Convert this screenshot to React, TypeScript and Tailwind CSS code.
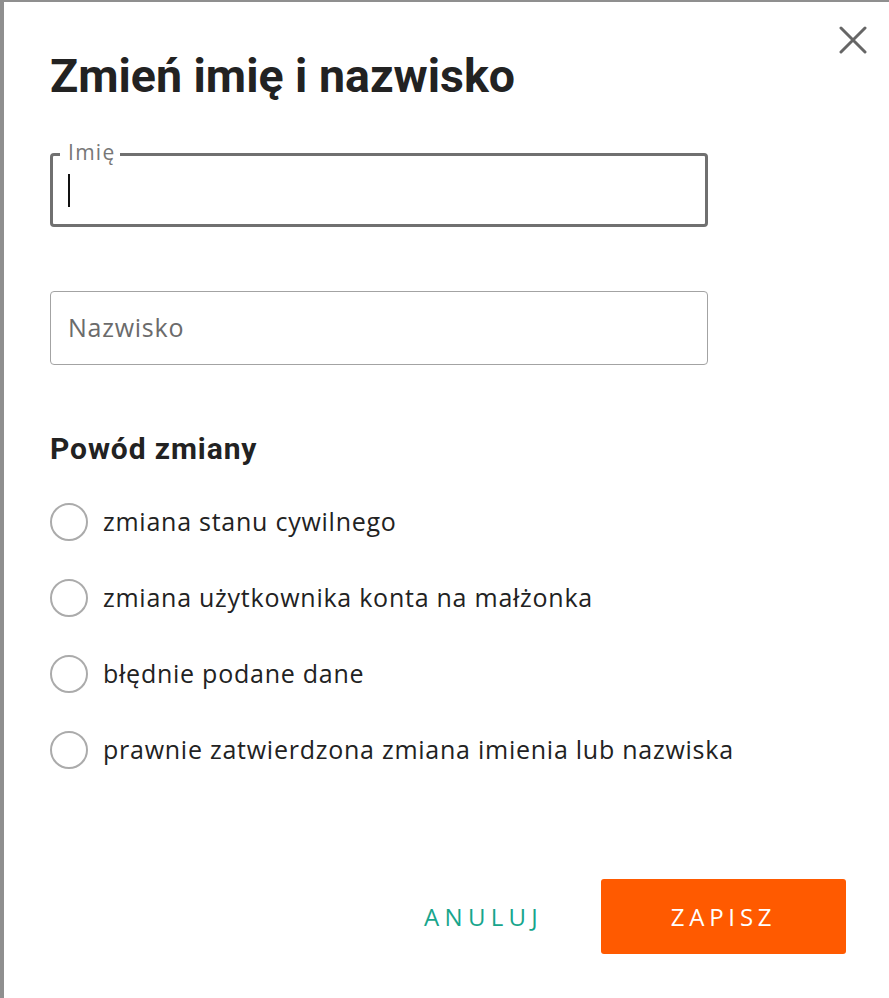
import { useState } from 'react';

const reasons = [
  'zmiana stanu cywilnego',
  'zmiana użytkownika konta na małżonka',
  'błędnie podane dane',
  'prawnie zatwierdzona zmiana imienia lub nazwiska',
];

export default function App() {
  const [reason, setReason] = useState<number | null>(null);

  return (
    <div className="min-h-screen bg-[#8f8f8f] pl-[4px] pt-[2px] font-['Open_Sans',sans-serif]">
      <div className="relative min-h-[996px] bg-white pl-[46px] pr-[43px] pt-[48px]">
        {/* Close */}
        <button className="absolute right-[20px] top-[22px] p-[2px] text-[#666]" aria-label="Zamknij">
          <svg width="28" height="28" viewBox="0 0 28 28" fill="none" stroke="currentColor" strokeWidth="3" strokeLinecap="round">
            <path d="M2 2 L26 26 M26 2 L2 26" />
          </svg>
        </button>

        <h1 className="font-['Roboto',sans-serif] text-[46.5px] font-bold leading-[52px] text-[#222]">Zmień imię i nazwisko</h1>

        {/* Imię - focused */}
        <div className="relative mt-[51px] w-[658px]">
          <div className="flex h-[74px] items-center rounded-[4px] border-[3px] border-[#707070] px-[15px]">
            <span className="h-[33px] w-[2px] bg-[#111]" />
          </div>
          <span className="absolute left-[10px] top-[-14px] bg-white pl-[8px] pr-[5px] text-[21px] leading-[26px] tracking-[0.06em] text-[#777]">Imię</span>
        </div>

        {/* Nazwisko */}
        <div className="mt-[64px] flex h-[74px] w-[658px] items-center rounded-[4px] border border-[#a3a3a3] px-[17px]">
          <span className="text-[25px] tracking-[0.03em] text-[#6b6b6b]">Nazwisko</span>
        </div>

        <h2 className="mt-[66px] font-['Roboto',sans-serif] text-[30px] font-bold leading-[36px] tracking-[0.03em] text-[#222]">Powód zmiany</h2>

        <div className="mt-[17px] flex flex-col">
          {reasons.map((r, i) => (
            <label key={r} className="flex h-[76px] cursor-pointer items-center gap-[15px]" onClick={() => setReason(i)}>
              <span className="flex h-[38px] w-[38px] shrink-0 items-center justify-center rounded-full border-2 border-[#ababab]">
                {reason === i && <span className="h-[18px] w-[18px] rounded-full bg-[#ff5a00]" />}
              </span>
              <span className="text-[25px] tracking-[0.03em] text-[#222]">{r}</span>
            </label>
          ))}
        </div>

        <div className="mt-[91px] flex items-center justify-end gap-[58px]">
          <button className="text-[24px] tracking-[0.22em] text-[#17a58c]">ANULUJ</button>
          <button className="h-[75px] w-[245px] rounded-[3px] bg-[#ff5a00] text-[24px] tracking-[0.2em] text-white">ZAPISZ</button>
        </div>
      </div>
    </div>
  );
}
